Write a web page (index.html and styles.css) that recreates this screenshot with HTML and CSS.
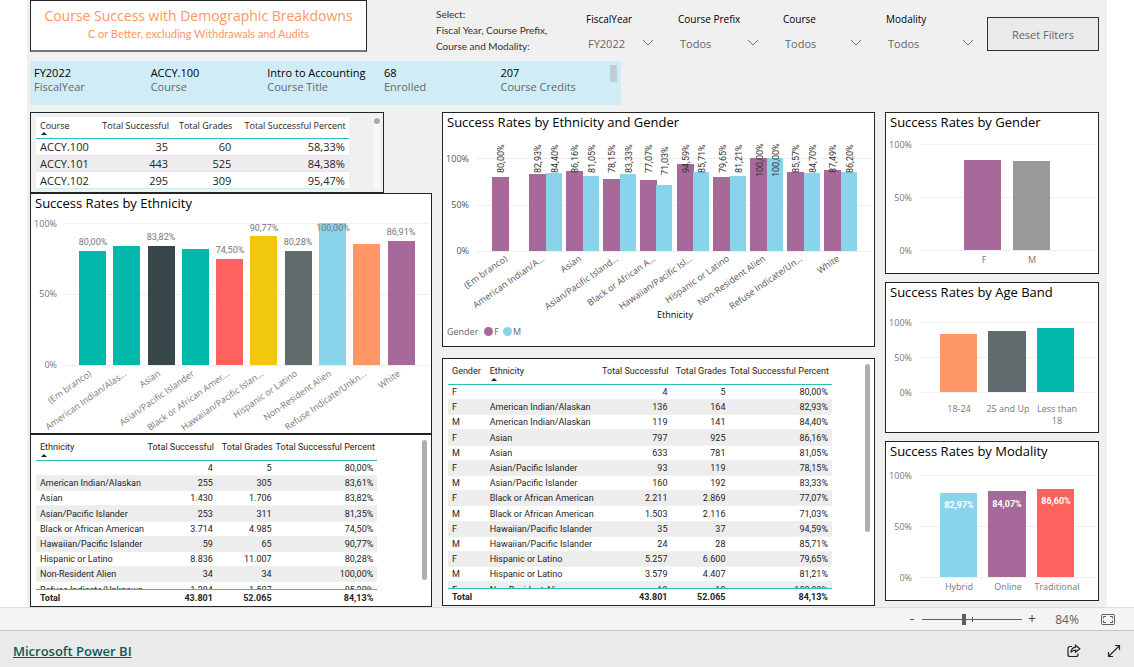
FILE: index.html
```html
<!DOCTYPE html>
<html lang="en">
<head>
<meta charset="utf-8">
<meta name="viewport" content="width=device-width, initial-scale=1">
<title>Course Success with Demographic Breakdowns</title>
<link rel="stylesheet" href="styles.css">
</head>
<body>
<main class="report">
  <header class="header">
    <div class="title-card">
      <h1 class="title">Course Success with Demographic Breakdowns</h1>
      <p class="subtitle">C or Better, excluding Withdrawals and Audits</p>
    </div>
    <p class="hint">Select:<br>Fiscal Year, Course Prefix,<br>Course and Modality:</p>
    <div class="filter">
      <label class="filter-label" for="year">FiscalYear</label>
      <div class="filter-box">
        <select class="filter-select" id="year"><option>FY2022</option></select>
        <svg class="chevron" viewBox="0 0 12 8"><path d="M1 1l5 5 5-5"/></svg>
      </div>
    </div>
    <div class="filter">
      <label class="filter-label" for="prefix">Course Prefix</label>
      <div class="filter-box">
        <select class="filter-select" id="prefix"><option>Todos</option></select>
        <svg class="chevron" viewBox="0 0 12 8"><path d="M1 1l5 5 5-5"/></svg>
      </div>
    </div>
    <div class="filter">
      <label class="filter-label" for="course">Course</label>
      <div class="filter-box">
        <select class="filter-select" id="course"><option>Todos</option></select>
        <svg class="chevron" viewBox="0 0 12 8"><path d="M1 1l5 5 5-5"/></svg>
      </div>
    </div>
    <div class="filter filter-last">
      <label class="filter-label" for="modality">Modality</label>
      <div class="filter-box">
        <select class="filter-select" id="modality"><option>Todos</option></select>
        <svg class="chevron" viewBox="0 0 12 8"><path d="M1 1l5 5 5-5"/></svg>
      </div>
    </div>
    <button class="reset" type="button">Reset Filters</button>
  </header>

  <section class="summary">
    <dl class="facts">
      <div class="fact"><dd class="fact-value">FY2022</dd><dt class="fact-name">FiscalYear</dt></div>
      <div class="fact"><dd class="fact-value">ACCY.100</dd><dt class="fact-name">Course</dt></div>
      <div class="fact"><dd class="fact-value">Intro to Accounting</dd><dt class="fact-name">Course Title</dt></div>
      <div class="fact"><dd class="fact-value">68</dd><dt class="fact-name">Enrolled</dt></div>
      <div class="fact"><dd class="fact-value">207</dd><dt class="fact-name">Course Credits</dt></div>
    </dl>
    <span class="summary-thumb"></span>
  </section>

  <div class="board">
    <div class="column column-joined">
      <section class="panel panel-courses">
        <table class="grid grid-courses">
          <colgroup><col style="width:18.3%"><col style="width:25.2%"><col style="width:20.2%"><col style="width:36.3%"></colgroup>
          <thead><tr><th class="sorted">Course</th><th class="num">Total Successful</th><th class="num">Total Grades</th><th class="num">Total Successful Percent</th></tr></thead>
          <tbody>
            <tr><td>ACCY.100</td><td class="num">35</td><td class="num">60</td><td class="num">58,33%</td></tr>
            <tr><td>ACCY.101</td><td class="num">443</td><td class="num">525</td><td class="num">84,38%</td></tr>
            <tr><td>ACCY.102</td><td class="num">295</td><td class="num">309</td><td class="num">95,47%</td></tr>
          </tbody>
        </table>
        <div class="track"><span class="dot"></span></div>
      </section>

      <section class="panel">
        <h2 class="panel-title">Success Rates by Ethnicity</h2>
        <svg class="chart" viewBox="0 0 400 218" role="img" aria-label="Success rates by ethnicity">
          <path class="gridline" d="M34 8.5H398M34 79.5H398M34 150.5H398"/>
          <g class="axis end"><text x="26" y="12">100%</text><text x="26" y="82">50%</text><text x="26" y="153">0%</text></g>
          <rect class="teal" x="48" y="36" width="27" height="114"/>
          <rect class="teal" x="82" y="31" width="27" height="119"/>
          <rect class="dark" x="117" y="31" width="27" height="119"/>
          <rect class="teal" x="151" y="34" width="27" height="116"/>
          <rect class="red" x="185" y="44" width="27" height="106"/>
          <rect class="yellow" x="219" y="21" width="27" height="129"/>
          <rect class="slate" x="254" y="36" width="27" height="114"/>
          <rect class="sky" x="288" y="8" width="27" height="142"/>
          <rect class="orange" x="322" y="29" width="27" height="121"/>
          <rect class="plum" x="357" y="26" width="27" height="124"/>
          <g class="value mid">
            <text x="62" y="30">80,00%</text><text x="130" y="25">83,82%</text><text x="199" y="38">74,50%</text><text x="233" y="16">90,77%</text><text x="267" y="30">80,28%</text><text x="302" y="16">100,00%</text><text x="370" y="20">86,91%</text>
          </g>
          <g class="axis end">
            <text transform="translate(61 160) rotate(-35)">(Em branco)</text>
            <text transform="translate(96 160) rotate(-35)">American Indian/Alas...</text>
            <text transform="translate(130 160) rotate(-35)">Asian</text>
            <text transform="translate(164 160) rotate(-35)">Asian/Pacific Islander</text>
            <text transform="translate(199 160) rotate(-35)">Black or African Amer...</text>
            <text transform="translate(233 160) rotate(-35)">Hawaiian/Pacific Islan...</text>
            <text transform="translate(267 160) rotate(-35)">Hispanic or Latino</text>
            <text transform="translate(301 160) rotate(-35)">Non-Resident Alien</text>
            <text transform="translate(336 160) rotate(-35)">Refuse Indicate/Unkn...</text>
            <text transform="translate(370 160) rotate(-35)">White</text>
          </g>
        </svg>
      </section>

      <section class="panel panel-table">
        <div class="scroller scroller-left">
          <table class="grid grid-small">
            <colgroup><col style="width:32.2%"><col style="width:20.8%"><col style="width:17.2%"><col style="width:29.8%"></colgroup>
            <thead><tr><th class="sorted">Ethnicity</th><th class="num">Total Successful</th><th class="num">Total Grades</th><th class="num">Total Successful Percent</th></tr></thead>
            <tbody>
              <tr><td></td><td class="num">4</td><td class="num">5</td><td class="num">80,00%</td></tr>
              <tr><td>American Indian/Alaskan</td><td class="num">255</td><td class="num">305</td><td class="num">83,61%</td></tr>
              <tr><td>Asian</td><td class="num">1.430</td><td class="num">1.706</td><td class="num">83,82%</td></tr>
              <tr><td>Asian/Pacific Islander</td><td class="num">253</td><td class="num">311</td><td class="num">81,35%</td></tr>
              <tr><td>Black or African American</td><td class="num">3.714</td><td class="num">4.985</td><td class="num">74,50%</td></tr>
              <tr><td>Hawaiian/Pacific Islander</td><td class="num">59</td><td class="num">65</td><td class="num">90,77%</td></tr>
              <tr><td>Hispanic or Latino</td><td class="num">8.836</td><td class="num">11.007</td><td class="num">80,28%</td></tr>
              <tr><td>Non-Resident Alien</td><td class="num">34</td><td class="num">34</td><td class="num">100,00%</td></tr>
              <tr><td>Refuse Indicate/Unknown</td><td class="num">1.284</td><td class="num">1.507</td><td class="num">85,20%</td></tr>
            </tbody>
            <tfoot><tr><td>Total</td><td class="num">43.801</td><td class="num">52.065</td><td class="num">84,13%</td></tr></tfoot>
          </table>
        </div>
        <span class="thumb thumb-left"></span>
      </section>
    </div>

    <div class="column">
      <section class="panel">
        <h2 class="panel-title">Success Rates by Ethnicity and Gender</h2>
        <svg class="chart" viewBox="0 0 431 188" role="img" aria-label="Success rates by ethnicity and gender">
          <path class="gridline" d="M34 24.5H429M34 71.5H429M34 117.5H429"/>
          <g class="axis strong end"><text x="26" y="28">100%</text><text x="26" y="74">50%</text><text x="26" y="120">0%</text></g>
          <g class="plum">
            <rect x="49" y="43" width="17" height="74"/><rect x="86" y="40" width="17" height="77"/><rect x="123" y="37" width="17" height="80"/><rect x="160" y="45" width="17" height="72"/><rect x="197" y="46" width="17" height="71"/><rect x="234" y="30" width="17" height="87"/><rect x="270" y="43" width="17" height="74"/><rect x="307" y="24" width="17" height="93"/><rect x="344" y="38" width="17" height="79"/><rect x="381" y="36" width="17" height="81"/>
          </g>
          <g class="sky">
            <rect x="103" y="39" width="16" height="78"/><rect x="140" y="42" width="16" height="75"/><rect x="177" y="40" width="16" height="77"/><rect x="213" y="51" width="16" height="66"/><rect x="250" y="38" width="16" height="79"/><rect x="287" y="42" width="16" height="75"/><rect x="324" y="24" width="16" height="93"/><rect x="361" y="39" width="16" height="78"/><rect x="398" y="38" width="16" height="79"/>
          </g>
          <g class="value value-upright">
            <text transform="translate(61 39) rotate(-90)">80,00%</text>
            <text transform="translate(98 39) rotate(-90)">82,93%</text><text transform="translate(115 39) rotate(-90)">84,40%</text>
            <text transform="translate(135 39) rotate(-90)">86,16%</text><text transform="translate(152 39) rotate(-90)">81,05%</text>
            <text transform="translate(172 39) rotate(-90)">78,15%</text><text transform="translate(189 39) rotate(-90)">83,33%</text>
            <text transform="translate(209 39) rotate(-90)">77,07%</text><text transform="translate(225 41) rotate(-90)">71,03%</text>
            <text transform="translate(246 39) rotate(-90)">94,59%</text><text transform="translate(262 39) rotate(-90)">85,71%</text>
            <text transform="translate(283 39) rotate(-90)">79,65%</text><text transform="translate(299 39) rotate(-90)">81,21%</text>
            <text transform="translate(320 43) rotate(-90)">100,00%</text><text transform="translate(336 43) rotate(-90)">100,00%</text>
            <text transform="translate(356 39) rotate(-90)">85,57%</text><text transform="translate(373 39) rotate(-90)">84,70%</text>
            <text transform="translate(393 39) rotate(-90)">87,49%</text><text transform="translate(410 39) rotate(-90)">86,20%</text>
          </g>
          <g class="axis strong end">
            <text transform="translate(65 126) rotate(-35)">(Em branco)</text>
            <text transform="translate(102 126) rotate(-35)">American Indian/A...</text>
            <text transform="translate(139 126) rotate(-35)">Asian</text>
            <text transform="translate(176 126) rotate(-35)">Asian/Pacific Island...</text>
            <text transform="translate(213 126) rotate(-35)">Black or African A...</text>
            <text transform="translate(250 126) rotate(-35)">Hawaiian/Pacific Isl...</text>
            <text transform="translate(287 126) rotate(-35)">Hispanic or Latino</text>
            <text transform="translate(323 126) rotate(-35)">Non-Resident Alien</text>
            <text transform="translate(360 126) rotate(-35)">Refuse Indicate/Un...</text>
            <text transform="translate(397 126) rotate(-35)">White</text>
          </g>
          <text class="axis-title mid" x="232" y="184">Ethnicity</text>
        </svg>
        <div class="legend">
          <span class="legend-title">Gender</span>
          <span class="legend-item"><i class="swatch swatch-f"></i>F</span>
          <span class="legend-item"><i class="swatch swatch-m"></i>M</span>
        </div>
      </section>

      <section class="panel panel-table">
        <div class="scroller scroller-middle">
          <table class="grid grid-small">
            <colgroup><col style="width:9.8%"><col style="width:30%"><col style="width:18.4%"><col style="width:15.1%"><col style="width:26.7%"></colgroup>
            <thead><tr><th>Gender</th><th class="sorted">Ethnicity</th><th class="num">Total Successful</th><th class="num">Total Grades</th><th class="num">Total Successful Percent</th></tr></thead>
            <tbody>
              <tr><td>F</td><td></td><td class="num">4</td><td class="num">5</td><td class="num">80,00%</td></tr>
              <tr><td>F</td><td>American Indian/Alaskan</td><td class="num">136</td><td class="num">164</td><td class="num">82,93%</td></tr>
              <tr><td>M</td><td>American Indian/Alaskan</td><td class="num">119</td><td class="num">141</td><td class="num">84,40%</td></tr>
              <tr><td>F</td><td>Asian</td><td class="num">797</td><td class="num">925</td><td class="num">86,16%</td></tr>
              <tr><td>M</td><td>Asian</td><td class="num">633</td><td class="num">781</td><td class="num">81,05%</td></tr>
              <tr><td>F</td><td>Asian/Pacific Islander</td><td class="num">93</td><td class="num">119</td><td class="num">78,15%</td></tr>
              <tr><td>M</td><td>Asian/Pacific Islander</td><td class="num">160</td><td class="num">192</td><td class="num">83,33%</td></tr>
              <tr><td>F</td><td>Black or African American</td><td class="num">2.211</td><td class="num">2.869</td><td class="num">77,07%</td></tr>
              <tr><td>M</td><td>Black or African American</td><td class="num">1.503</td><td class="num">2.116</td><td class="num">71,03%</td></tr>
              <tr><td>F</td><td>Hawaiian/Pacific Islander</td><td class="num">35</td><td class="num">37</td><td class="num">94,59%</td></tr>
              <tr><td>M</td><td>Hawaiian/Pacific Islander</td><td class="num">24</td><td class="num">28</td><td class="num">85,71%</td></tr>
              <tr><td>F</td><td>Hispanic or Latino</td><td class="num">5.257</td><td class="num">6.600</td><td class="num">79,65%</td></tr>
              <tr><td>M</td><td>Hispanic or Latino</td><td class="num">3.579</td><td class="num">4.407</td><td class="num">81,21%</td></tr>
              <tr><td>F</td><td>Non-Resident Alien</td><td class="num">19</td><td class="num">19</td><td class="num">100,00%</td></tr>
            </tbody>
            <tfoot><tr><td>Total</td><td></td><td class="num">43.801</td><td class="num">52.065</td><td class="num">84,13%</td></tr></tfoot>
          </table>
        </div>
        <span class="thumb thumb-middle"></span>
      </section>
    </div>

    <div class="column column-side">
      <section class="panel">
        <h2 class="panel-title">Success Rates by Gender</h2>
        <svg class="chart" viewBox="0 0 212 139" role="img" aria-label="Success rates by gender">
          <path class="gridline" d="M34 10.5H210M34 63.5H210M34 116.5H210"/>
          <g class="axis end"><text x="26" y="14">100%</text><text x="26" y="67">50%</text><text x="26" y="120">0%</text></g>
          <rect class="plum" x="78" y="26" width="37" height="90"/>
          <rect class="gray" x="127" y="27" width="37" height="89"/>
          <g class="axis mid"><text x="98" y="129">F</text><text x="146" y="129">M</text></g>
        </svg>
      </section>
      <section class="panel">
        <h2 class="panel-title">Success Rates by Age Band</h2>
        <svg class="chart" viewBox="0 0 212 128" role="img" aria-label="Success rates by age band">
          <path class="gridline" d="M34 18.5H210M34 53.5H210M34 88.5H210"/>
          <g class="axis end"><text x="26" y="22">100%</text><text x="26" y="57">50%</text><text x="26" y="92">0%</text></g>
          <rect class="orange" x="54" y="30" width="37" height="58"/>
          <rect class="slate" x="102" y="27" width="38" height="61"/>
          <rect class="teal" x="151" y="24" width="37" height="64"/>
          <g class="axis mid"><text x="73" y="108">18-24</text><text x="122" y="108">25 and Up</text><text x="171" y="108">Less than</text><text x="171" y="120">18</text></g>
        </svg>
      </section>
      <section class="panel">
        <h2 class="panel-title">Success Rates by Modality</h2>
        <svg class="chart" viewBox="0 0 212 137" role="img" aria-label="Success rates by modality">
          <path class="gridline" d="M34 12.5H210M34 63.5H210M34 114.5H210"/>
          <g class="axis end"><text x="26" y="16">100%</text><text x="26" y="67">50%</text><text x="26" y="118">0%</text></g>
          <rect class="sky" x="54" y="30" width="37" height="84"/>
          <rect class="plum" x="102" y="28" width="38" height="86"/>
          <rect class="red" x="151" y="26" width="37" height="88"/>
          <g class="value value-inside mid"><text x="73" y="45">82,97%</text><text x="121" y="44">84,07%</text><text x="170" y="41">86,60%</text></g>
          <g class="axis mid"><text x="73" y="127">Hybrid</text><text x="122" y="127">Online</text><text x="171" y="127">Traditional</text></g>
        </svg>
      </section>
    </div>
  </div>
</main>

<div class="zoombar">
  <button class="zoom-step" type="button" aria-label="Zoom out">-</button>
  <div class="zoom-track">
    <input class="zoom-range" type="range" min="0" max="100" value="42" aria-label="Zoom level">
    <span class="zoom-tick"></span>
  </div>
  <button class="zoom-step" type="button" aria-label="Zoom in">+</button>
  <span class="zoom-value">84%</span>
  <button class="icon-button" type="button" aria-label="Fit to page">
    <svg class="icon-fit" viewBox="0 0 14 11"><rect x=".5" y=".5" width="13" height="10" rx="1"/><path d="M5 2.5H2.5V4.5M9 2.5h2.5V4.5M5 8.5H2.5V6.5M9 8.5h2.5V6.5"/></svg>
  </button>
</div>

<footer class="footer">
  <a class="brand" href="#">Microsoft Power BI</a>
  <div class="footer-actions">
    <button class="icon-button" type="button" aria-label="Share">
      <svg class="icon-line" viewBox="0 0 14 14"><path d="M5 2.5H3A2 2 0 0 0 1 4.500V10.500A2 2 0 0 0 3 12.500H9A2 2 0 0 0 11 10.500V9.500"/><path d="M8.500 1.200L12.800 4.700L8.500 8.200V6.200C6.300 6.200 5 6.900 3.900 8.500C4.200 5.500 5.700 3.500 8.500 3.200Z"/></svg>
    </button>
    <button class="icon-button" type="button" aria-label="Full screen">
      <svg class="icon-line" viewBox="0 0 14 14"><path d="M1.500 12.500L12.500 1.500M8 1.500H12.500V6M1.500 8V12.500H6"/></svg>
    </button>
  </div>
</footer>
</body>
</html>
```
FILE: styles.css
```css
* { box-sizing: border-box; }

body {
  margin: 0;
  min-height: 100vh;
  display: flex;
  flex-direction: column;
  background: #fff;
  color: #252423;
  font-family: "Open Sans", "Noto Sans", sans-serif;
}

h1, h2, p, dl, dd { margin: 0; font-weight: 400; }

.report {
  flex: 1;
  margin: 0 27px;
  padding: 0 8px 0 3px;
  background: #f0f0f0;
}

/* Header: title, hint, slicers */
.header {
  display: grid;
  grid-template-columns: 406fr 147fr 92fr 105fr 103fr 104fr 112fr;
  align-items: start;
  height: 61px;
}
.title-card {
  width: 83%;
  padding: 5px 0 9px;
  border: 1px solid #252423;
  border-bottom: 2px solid #777;
  background: #fff;
  color: #fe9666;
  text-align: center;
  white-space: nowrap;
}
.title { font-size: 14px; line-height: 20px; }
.subtitle { font: 11px/15px Lato, "Open Sans", sans-serif; }
.hint { padding-top: 6px; font: 10px/16px Lato, "Open Sans", sans-serif; color: #333; white-space: nowrap; }
.filter { display: flex; flex-direction: column; gap: 4px; padding: 11px 16px 0 0; }
.filter-last { padding-right: 8px; }
.filter-label { padding-left: 3px; font-size: 10px; line-height: 16px; color: #000; }
.filter-box { position: relative; }
.filter-select {
  width: 100%;
  height: 22px;
  padding: 0 20px 0 4px;
  border: 1px solid #ededed;
  border-radius: 0;
  appearance: none;
  background: transparent;
  color: #666;
  font: 11px "Open Sans", sans-serif;
}
.chevron { position: absolute; right: 5px; top: 8px; width: 12px; height: 8px; fill: none; stroke: #777; pointer-events: none; }
.reset {
  height: 34px;
  margin-top: 17px;
  border: 1px solid #333;
  background: #eaeaea;
  color: #666;
  font: 11px "Open Sans", sans-serif;
}

/* Course summary strip */
.summary {
  position: relative;
  width: 55.3%;
  height: 44px;
  padding: 5px 4px;
  background: #d0edf7;
}
.facts { display: grid; grid-template-columns: repeat(5, 1fr); font-size: 11px; line-height: 14px; white-space: nowrap; }
.fact-value { color: #000; }
.fact-name { color: #666; }
.summary-thumb { position: absolute; top: 4px; right: 4px; width: 7px; height: 17px; background: #c0ced4; }

/* Board */
.board {
  display: grid;
  grid-template-columns: 402fr 433fr 214fr;
  gap: 10px;
  align-items: start;
  padding-top: 7px;
}
.column { display: flex; flex-direction: column; gap: 11px; }
.column-joined { gap: 0; }
.column-side { gap: 8px; }
.panel { border: 1px solid #252423; background: #fff; }
.panel-title { padding: 0 0 3px 4px; font-size: 13px; line-height: 18px; color: #000; white-space: nowrap; }

/* Tables */
.panel-courses { display: flex; width: 88%; height: 81px; padding: 4px 3px 3px 5px; background: #f0f0f0; }
.panel-table { display: flex; justify-content: space-between; padding: 3px 4px 0 5px; }
.scroller { overflow: hidden; }
.scroller-left { width: 87.3%; height: 168px; }
.scroller-middle { width: 91%; height: 243px; }
.grid { width: 100%; table-layout: fixed; border-collapse: separate; border-spacing: 0; background: #fff; }
.grid th, .grid td { padding: 0 4px; text-align: left; white-space: nowrap; }
.grid .num { padding-left: 0; text-align: right; }
.grid th { position: relative; height: 22px; padding-bottom: 4px; border-bottom: 1px solid #2fbfb3; font-weight: 400; }
.grid th.num { padding-right: 3px; }
.sorted::after {
  content: "";
  position: absolute;
  left: 5px;
  bottom: 3px;
  border: 3px solid transparent;
  border-top: 0;
  border-bottom-color: #252423;
}
.grid-small { font-family: Roboto, "Open Sans", sans-serif; font-size: 9px; line-height: 14px; }
.grid-small th { height: 23px; padding-bottom: 5px; }
.grid-small td { height: 15px; border-bottom: 1px solid #f0f0f0; }
.grid-small tr:nth-child(5n + 4) td { height: 16px; }
.grid tbody tr:nth-child(even) { background: #ededed; }
.grid-small tfoot td {
  position: sticky;
  bottom: 0;
  height: 17px;
  border-top: 1px solid #2fbfb3;
  border-bottom: 0;
  background: #fff;
  font-weight: 700;
}
.grid-courses { width: 317px; flex: 0 1 91%; font-size: 9px; line-height: 15px; }
.grid-courses td { height: 16px; border-bottom: 1px solid #d0edf7; font-size: 11px; }

.track { width: 6px; margin-left: auto; background: #f8f8f8; }
.dot { display: block; width: 6px; height: 6px; margin-top: 1px; border-radius: 3px; background: #aaa; }
.thumb { width: 5px; margin-top: 2px; border-radius: 3px; background: #b0aeac; }
.thumb-left { height: 140px; }
.thumb-middle { height: 168px; }

/* Charts */
.chart { display: block; width: 100%; height: auto; }
.gridline { stroke: #eee; fill: none; }
.axis { font-size: 9px; fill: #777; }
.strong { fill: #555; }
.axis-title { font-size: 9px; fill: #000; }
.end { text-anchor: end; }
.mid { text-anchor: middle; }
.value { font-family: Roboto, sans-serif; font-size: 9px; fill: #777; }
.value-upright { fill: #333; }
.value-inside { fill: #fff; font-weight: 700; }
.teal { fill: #01b8aa; }
.dark { fill: #374649; }
.red { fill: #fd625e; }
.yellow { fill: #f2c80f; }
.slate { fill: #5f6b6d; }
.sky { fill: #8ad4eb; }
.orange { fill: #fe9666; }
.plum { fill: #a66999; }
.gray { fill: #999; }
.legend { display: flex; align-items: center; gap: 4px; height: 24px; padding: 0 4px 6px; font-size: 9px; color: #666; }
.legend-title { margin-right: 2px; }
.legend-item { display: flex; align-items: center; gap: 1px; }
.swatch { width: 9px; height: 9px; border-radius: 50%; }
.swatch-f { background: #a66999; }
.swatch-m { background: #8ad4eb; }

/* Zoom bar and footer */
.zoombar {
  display: flex;
  align-items: center;
  justify-content: flex-end;
  height: 24px;
  padding-right: 19px;
  border-top: 1px solid #ddd;
  border-bottom: 1px solid #c8c8c8;
  background: #f4f4f4;
  color: #605e5c;
}
.zoom-step { width: 20px; padding: 0; border: 0; background: none; color: #444; font: 14px/20px "Open Sans", sans-serif; }
.zoom-track { position: relative; display: flex; align-items: center; width: 100px; }
.zoom-range { width: 100%; height: 12px; margin: 0; appearance: none; background: linear-gradient(#605e5c, #605e5c) center / 100% 1px no-repeat; }
.zoom-range::-webkit-slider-thumb { appearance: none; width: 4px; height: 11px; background: #605e5c; }
.zoom-tick { position: absolute; left: 50%; top: 4px; width: 1px; height: 5px; background: #605e5c; }
.zoom-value { width: 50px; margin-right: 9px; font-size: 12px; text-align: center; }
.icon-button { display: flex; padding: 0; border: 0; background: none; }
.icon-fit { width: 14px; height: 11px; fill: none; stroke: #605e5c; }
.footer { display: flex; align-items: center; justify-content: space-between; height: 36px; padding: 4px 13px 0; background: #eaeaea; }
.brand { color: #0b5a55; font-size: 13px; font-weight: 600; }
.footer-actions { display: flex; gap: 26px; }
.icon-line { width: 14px; height: 14px; fill: none; stroke: #252423; stroke-width: 1.2; }
```
